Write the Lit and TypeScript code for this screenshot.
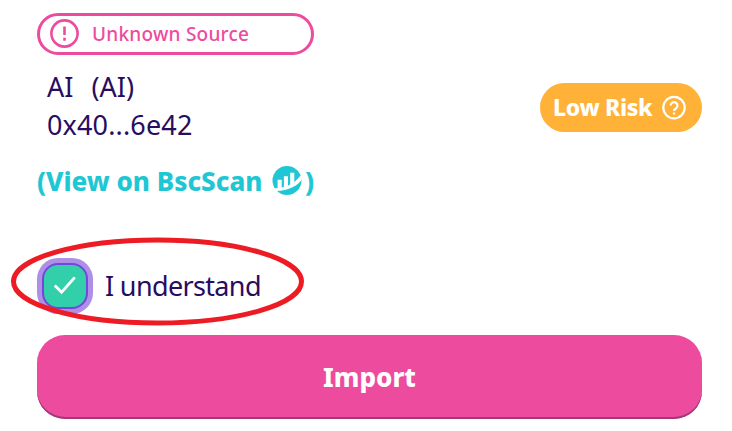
import { LitElement, html, css } from 'lit';
import { customElement, property } from 'lit/decorators.js';

/**
 * @element source-tag
 * Outlined pill that warns about the list a token comes from
 */
@customElement('source-tag')
export class SourceTag extends LitElement {
  static styles = css`
    :host {
      display: flex;
      align-items: center;
      box-sizing: border-box;
      width: 277px;
      height: 42px;
      padding-left: 10px;
      border: 3px solid #ed4b9e;
      border-radius: 21px;
      color: #ed4b9e;
      font: 500 19px/1 'Noto Sans', 'Open Sans', sans-serif;
    }
    svg {
      width: 30px;
      height: 30px;
      margin-right: 12px;
      flex: none;
    }
    .label {
      letter-spacing: 0.25px;
      white-space: nowrap;
    }
  `;

  render() {
    return html`
      <svg viewBox="0 0 30 30" fill="none" stroke="currentColor" stroke-width="2.6">
        <circle cx="14.5" cy="14.5" r="13.1" />
        <path d="M14.5 7.5V16M14.5 18.8V21.8" />
      </svg>
      <span class="label"><slot></slot></span>
    `;
  }
}

/**
 * @element risk-tag
 */
@customElement('risk-tag')
export class RiskTag extends LitElement {
  static styles = css`
    :host {
      display: flex;
      align-items: center;
      justify-content: space-between;
      box-sizing: border-box;
      width: 162px;
      height: 49px;
      padding: 0 15px 0 13px;
      border-radius: 25px;
      background: #ffb237;
      color: #fff;
      font: 800 23px/1 'Noto Sans', 'Open Sans', sans-serif;
    }
    .label {
      letter-spacing: -0.35px;
      white-space: nowrap;
    }
    svg {
      width: 26px;
      height: 26px;
      flex: none;
    }
  `;

  render() {
    return html`
      <span class="label"><slot></slot></span>
      <svg viewBox="0 0 26 26" fill="none" stroke="currentColor" stroke-width="2.2">
        <circle cx="13" cy="12.6" r="10.7" />
        <path d="M9.7 10.6a3.4 3.4 0 1 1 5.5 2.6c-1.3 1-2.2 1.4-2.2 2.9M13 17.4v2.2" />
      </svg>
    `;
  }
}

/**
 * @element check-box
 * @attr {boolean} checked - shows the tick
 */
@customElement('check-box')
export class CheckBox extends LitElement {
  @property({ type: Boolean }) checked = false;

  static styles = css`
    :host {
      display: flex;
      box-sizing: border-box;
      width: 46px;
      height: 46px;
      border: 2px solid #7645d9;
      border-radius: 16px;
      background: #31d0aa;
      box-shadow: 0 0 0 5px #ae8fe8;
    }
    svg {
      width: 42px;
      height: 42px;
    }
  `;

  render() {
    if (!this.checked) return null;
    return html`
      <svg viewBox="0 0 42 42" fill="none" stroke="#fff" stroke-width="2.8">
        <path d="M10.8 20.6L17.6 27.2L30.8 12.4" />
      </svg>
    `;
  }
}

@customElement('app-root')
export class AppRoot extends LitElement {
  static styles = css`
    :host {
      display: block;
      position: relative;
      box-sizing: border-box;
      width: 732px;
      height: 431px;
      padding: 13px 30px 0 37px;
      overflow: hidden;
      background: #fff;
      color: #280d5f;
      font-family: 'Noto Sans', 'Open Sans', sans-serif;
    }
    .token {
      display: flex;
      justify-content: space-between;
      align-items: flex-start;
      margin-top: 13px;
      padding-left: 10px;
    }
    .info {
      font-size: 27px;
      line-height: 38px;
      white-space: nowrap;
    }
    .name {
      display: flex;
      gap: 18px;
    }
    .address {
      letter-spacing: 0.15px;
    }
    risk-tag {
      margin-top: 15px;
    }
    .scan {
      display: flex;
      align-items: center;
      height: 38px;
      margin-top: 18px;
      color: #1fc7d4;
      font-size: 26px;
      font-weight: 800;
      line-height: 38px;
      white-space: nowrap;
    }
    .link {
      width: 225px;
    }
    .scan svg {
      width: 31px;
      height: 30px;
      margin: 0 2px 0 10px;
    }
    .accept {
      display: flex;
      align-items: center;
      gap: 17px;
      height: 46px;
      margin: 63px 0 0 5px;
      font-size: 27px;
      white-space: nowrap;
    }
    .terms {
      padding-bottom: 2px;
      letter-spacing: -0.65px;
    }
    .import {
      display: block;
      width: 665px;
      height: 84px;
      margin-top: 26px;
      padding: 0;
      border: 0;
      border-radius: 28px;
      background: #ed4b9e;
      box-shadow: inset 0 -2px 0 #a33879;
      color: #fff;
      font: 800 26px/1 'Noto Sans', 'Open Sans', sans-serif;
    }
    /* hand-drawn ring laid over the checkbox row */
    .ring {
      position: absolute;
      left: 0;
      top: 228px;
      width: 320px;
      height: 106px;
      pointer-events: none;
    }
  `;

  render() {
    return html`
      <source-tag>Unknown Source</source-tag>
      <div class="token">
        <div class="info">
          <div class="name"><span>AI</span><span>(AI)</span></div>
          <div class="address">0x40...6e42</div>
        </div>
        <risk-tag>Low Risk</risk-tag>
      </div>
      <div class="scan">
        <span class="link">(View on BscScan</span>
        <svg viewBox="0 0 31 30">
          <circle cx="15" cy="14.5" r="14.5" fill="currentColor" />
          <path d="M5.6 24V13.8h4.1V24zM11.9 23V10.2h4.1V23zM18.2 20.5V6.8h4.1V18z" fill="#fff" />
          <path d="M2 22.4C13 22.4 22 18.5 28.6 9.6L31 11.5C26.5 20 16.5 24.6 4 25z" fill="#fff" />
        </svg>
        <span>)</span>
      </div>
      <div class="accept">
        <check-box checked></check-box>
        <span class="terms">I understand</span>
      </div>
      <button class="import">Import</button>
      <svg class="ring" viewBox="0 0 320 106" fill="none" stroke="#ed1c24" stroke-width="5">
        <ellipse cx="157.5" cy="53.5" rx="144" ry="41.5" />
      </svg>
    `;
  }
}
